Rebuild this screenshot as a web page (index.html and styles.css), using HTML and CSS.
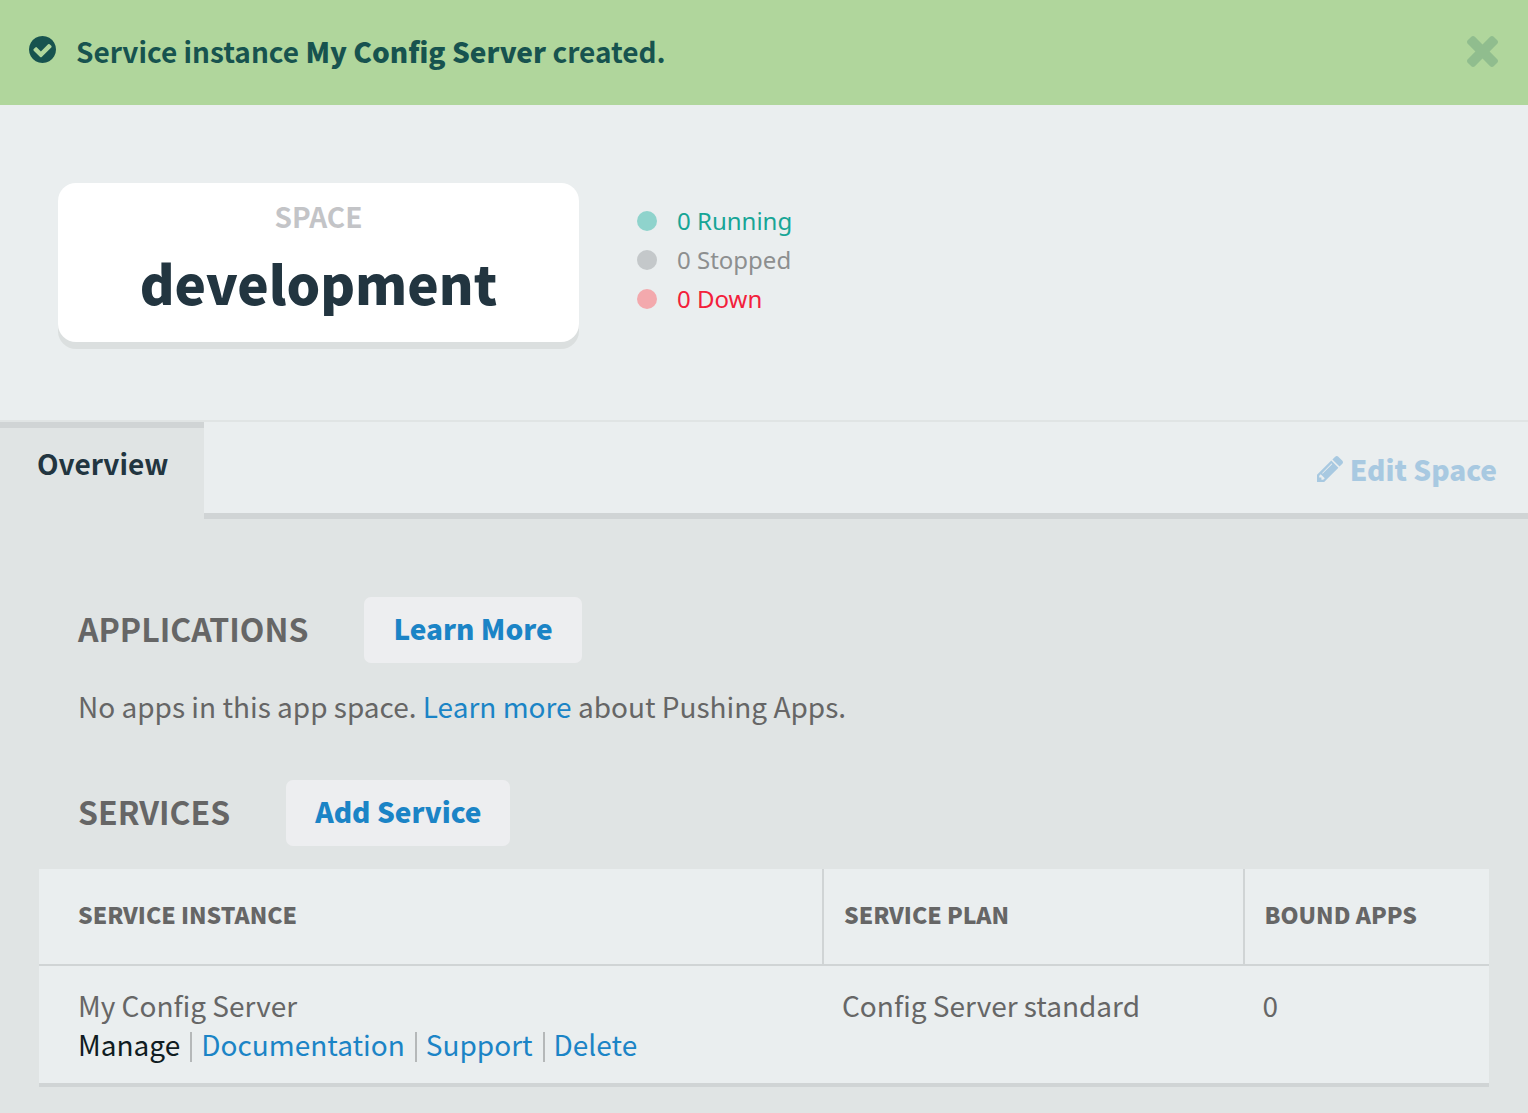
FILE: index.html
```html
<!DOCTYPE html>
<html lang="en">
<head>
<meta charset="utf-8">
<title>development</title>
<meta name="viewport" content="width=device-width, initial-scale=1">
<link rel="stylesheet" href="styles.css">
</head>
<body>
<div class="flash" role="status">
  <svg class="flash-icon" viewBox="128 128 1536 1536" aria-hidden="true"><path d="M1412 734q0-28-18-46l-91-90q-19-19-45-19t-45 19l-408 407-226-226q-19-19-45-19t-45 19l-91 90q-18 18-18 46 0 27 18 45l362 362q19 19 45 19 27 0 46-19l543-543q18-18 18-45zm252 162q0 209-103 385.500t-279.500 279.500-385.500 103-385.500-103-279.500-279.500-103-385.500 103-385.500 279.500-279.500 385.500-103 385.500 103 279.500 279.500 103 385.500z"/></svg>
  <p class="flash-text">Service instance <b>My Config Server</b> created.</p>
  <button class="flash-close" type="button" aria-label="Close">
    <svg viewBox="302 366 1188 1188" aria-hidden="true"><path d="M1490 1322q0 40-28 68l-136 136q-28 28-68 28t-68-28l-294-294-294 294q-28 28-68 28t-68-28l-136-136q-28-28-28-68t28-68l294-294-294-294q-28-28-28-68t28-68l136-136q28-28 68-28t68 28l294 294 294-294q28-28 68-28t68 28l136 136q28 28 28 68t-28 68l-294 294 294 294q28 28 28 68z"/></svg>
  </button>
</div>
<header class="space-header">
  <div class="space-card">
    <span class="space-label">SPACE</span>
    <h1 class="space-name">development</h1>
  </div>
  <ul class="statuses">
    <li class="status running">0 Running</li>
    <li class="status stopped">0 Stopped</li>
    <li class="status down">0 Down</li>
  </ul>
</header>
<nav class="tabs">
  <a class="tab" href="#overview">Overview</a>
  <div class="tabs-rest">
    <a class="edit" href="#edit">
      <svg class="pencil" viewBox="128 149 1515 1515" aria-hidden="true"><path d="M491 1536l91-91-235-235-91 91v107h128v128h107zm523-928q0-22-22-22-10 0-17 7l-542 542q-7 7-7 17 0 22 22 22 10 0 17-7l542-542q7-7 7-17zm-54-192l416 416-832 832h-416v-416zm683 96q0 53-37 90l-166 166-416-416 166-165q36-38 90-38 53 0 91 38l235 234q37 39 37 91z"/></svg>
      <span>Edit Space</span>
    </a>
  </div>
</nav>
<main class="content" id="overview">
  <section class="block">
    <div class="block-head">
      <h2>APPLICATIONS</h2>
      <button class="btn" type="button">Learn More</button>
    </div>
    <p class="note">No apps in this app space. <a href="#learn">Learn more</a> about Pushing Apps.</p>
  </section>
  <section class="block">
    <div class="block-head">
      <h2>SERVICES</h2>
      <button class="btn" type="button">Add Service</button>
    </div>
    <table class="services">
      <thead>
        <tr><th class="col-instance" scope="col">SERVICE INSTANCE</th><th class="col-plan" scope="col">SERVICE PLAN</th><th scope="col">BOUND APPS</th></tr>
      </thead>
      <tbody>
        <tr>
          <td>My Config Server
            <ul class="actions">
              <li><a class="manage" href="#manage">Manage</a></li>
              <li><a href="#docs">Documentation</a></li>
              <li><a href="#support">Support</a></li>
              <li><a href="#delete">Delete</a></li>
            </ul>
          </td>
          <td>Config Server standard</td>
          <td>0</td>
        </tr>
      </tbody>
    </table>
  </section>
</main>
</body>
</html>
```
FILE: styles.css
```css
* { box-sizing: border-box; }
body {
  margin: 0;
  min-height: 100vh;
  background: #e0e4e4;
  color: #666;
  font: 28px/39px "Noto Sans CJK SC", "Noto Sans", sans-serif;
}
h1, h2, p, ul { margin: 0; padding: 0; }
ul { list-style: none; }
a { color: #1b84c6; text-decoration: none; }
button { font: inherit; border: 0; cursor: pointer; }
svg { fill: currentColor; }

.flash {
  display: flex;
  align-items: center;
  padding: 32px 30px 34px 29px;
  background: #b0d69c;
  color: #17534f;
}
.flash-icon { width: 27px; height: 27px; margin-right: 20px; margin-bottom: 4px; }
.flash-text { flex: 1; font-weight: 700; }
.flash-close { display: flex; padding: 0; background: none; color: #90bd8e; }
.flash-close svg { width: 31px; height: 31px; }

.space-header {
  display: flex;
  align-items: flex-start;
  gap: 58px;
  padding: 78px 58px;
  background: #eaeeef;
  border-bottom: 2px solid #e0e4e4;
}
.space-card {
  width: 521px;
  padding: 14px 20px 17px;
  border-radius: 18px;
  background: #fff;
  box-shadow: 0 7px 0 #dbdfdf;
  text-align: center;
}
.space-label { display: block; color: #c3c4c7; font-weight: 700; }
.space-name { padding-top: 3px; color: #223540; font-size: 53px; line-height: 86px; font-weight: 900; }
.statuses { padding-top: 18px; font: 24px/39px "Noto Sans", sans-serif; }
.status { display: flex; align-items: center; gap: 20px; }
.status::before { content: ""; width: 20px; height: 20px; border-radius: 50%; background: #c4c8ca; }
.running { color: #17a596; }
.running::before { background: #8fd3cc; }
.stopped { color: #8d8f8f; }
.down { color: #f3203b; }
.down::before { background: #f3a9ad; }

.tabs { display: flex; background: #eaeeef; }
.tab {
  padding: 16px 36px 36px 37px;
  border-top: 6px solid #d0d4d5;
  background: #e0e4e4;
  color: #223540;
  font-weight: 700;
}
.tabs-rest {
  flex: 1;
  display: flex;
  justify-content: flex-end;
  align-items: center;
  padding: 3px 31px 0;
  border-bottom: 6px solid #d0d4d5;
}
.edit { display: flex; align-items: center; gap: 7px; color: #a8c9e1; font-weight: 900; }
.pencil { width: 26px; height: 26px; }

.content { padding: 78px 39px 26px; }
.block + .block { margin-top: 54px; }
.block-head { display: flex; align-items: center; gap: 56px; padding-left: 39px; }
h2 { padding-bottom: 4px; font-size: 32px; line-height: 39px; font-weight: 700; }
.btn { padding: 12px 29px 15px; border-radius: 7px; background: #edeef0; color: #1b84c6; font-weight: 900; }
.note { padding: 24px 39px 0; }

.services {
  width: 100%;
  margin-top: 23px;
  border-collapse: separate;
  border-spacing: 0;
  table-layout: fixed;
  background: #eaeeef;
  border-bottom: 4px solid #d0d4d5;
}
th {
  padding: 26px 20px 30px;
  border-bottom: 2px solid #d0d4d5;
  font-size: 23px;
  font-weight: 900;
  text-align: left;
}
th + th { border-left: 2px solid #d0d4d5; }
td { padding: 20px 20px 19px; vertical-align: top; }
th:first-child, td:first-child { padding-left: 39px; }
.col-instance { width: 54%; }
.col-plan { width: 29%; }
.actions { display: flex; }
.actions li { display: flex; align-items: center; }
.actions li + li::before { content: ""; width: 2px; height: 30px; margin: 4px 9px 0 10px; background: #b5b8b9; }
.actions .manage { color: #101c22; }
```
